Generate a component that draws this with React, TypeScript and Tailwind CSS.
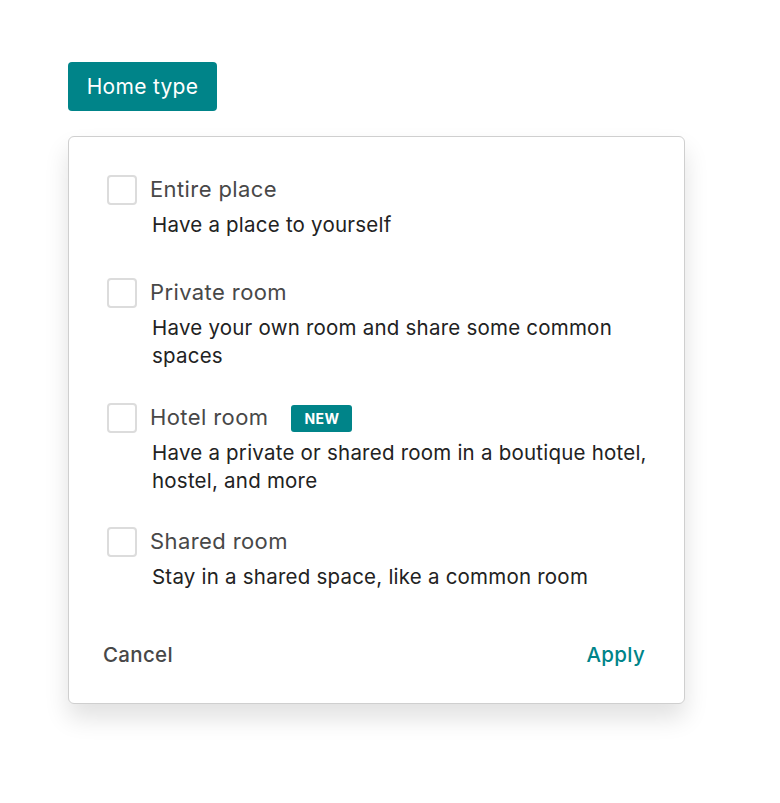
const font = { fontFamily: "Inter, 'Noto Sans', sans-serif" };

type HomeOption = {
  label: string;
  description: string;
  isNew?: boolean;
  gap: string;
};

const options: HomeOption[] = [
  { label: "Entire place", description: "Have a place to yourself", gap: "mt-0" },
  {
    label: "Private room",
    description: "Have your own room and share some common spaces",
    gap: "mt-[39px]",
  },
  {
    label: "Hotel room",
    description:
      "Have a private or shared room in a boutique hotel, hostel, and more",
    isNew: true,
    gap: "mt-[33px]",
  },
  {
    label: "Shared room",
    description: "Stay in a shared space, like a common room",
    gap: "mt-[32px]",
  },
];

function OptionRow({ option }: { option: HomeOption }) {
  return (
    <div className={`grid grid-cols-[43px_1fr] ${option.gap}`}>
      <span className="h-[30px] w-[30px] rounded-[4px] border-2 border-[#dcdcdc] bg-white" />
      <div className="flex h-[30px] items-center gap-[23px]">
        <span className="-mt-[2px] text-[22px] tracking-[0.4px] text-[#484848]">
          {option.label}
        </span>
        {option.isNew && (
          <span className="flex h-[27px] w-[61px] items-center justify-center rounded-[3px] bg-[#008489] text-[14px] font-bold tracking-wide text-white">
            NEW
          </span>
        )}
      </div>
      <p className="col-start-2 -mr-[14px] mt-[6px] pl-[2px] text-[20.5px] leading-[28px] tracking-[0.22px] text-[#222222]">
        {option.description}
      </p>
    </div>
  );
}

export default function App() {
  return (
    <div className="min-h-screen bg-white pl-[68px] pt-[62px]" style={font}>
      <button className="flex h-[49px] w-[149px] items-center justify-center rounded-[4px] bg-[#008489] text-[21px] tracking-[0.3px] text-white">
        Home type
      </button>

      <div className="mt-[25px] w-[617px] rounded-[6px] border border-[#cfcfcf] bg-white pb-[34px] pl-[38px] pr-[39px] pt-[38px] shadow-[0_14px_24px_rgba(0,0,0,0.12)]">
        {options.map((option) => (
          <OptionRow key={option.label} option={option} />
        ))}

        <div className="mt-[50px] flex items-center justify-between leading-[28px]">
          <button className="-ml-[4px] text-[20.5px] font-medium tracking-[0.3px] text-[#484848]">
            Cancel
          </button>
          <button className="text-[20.5px] font-medium tracking-[0.3px] text-[#008489]">
            Apply
          </button>
        </div>
      </div>
    </div>
  );
}
